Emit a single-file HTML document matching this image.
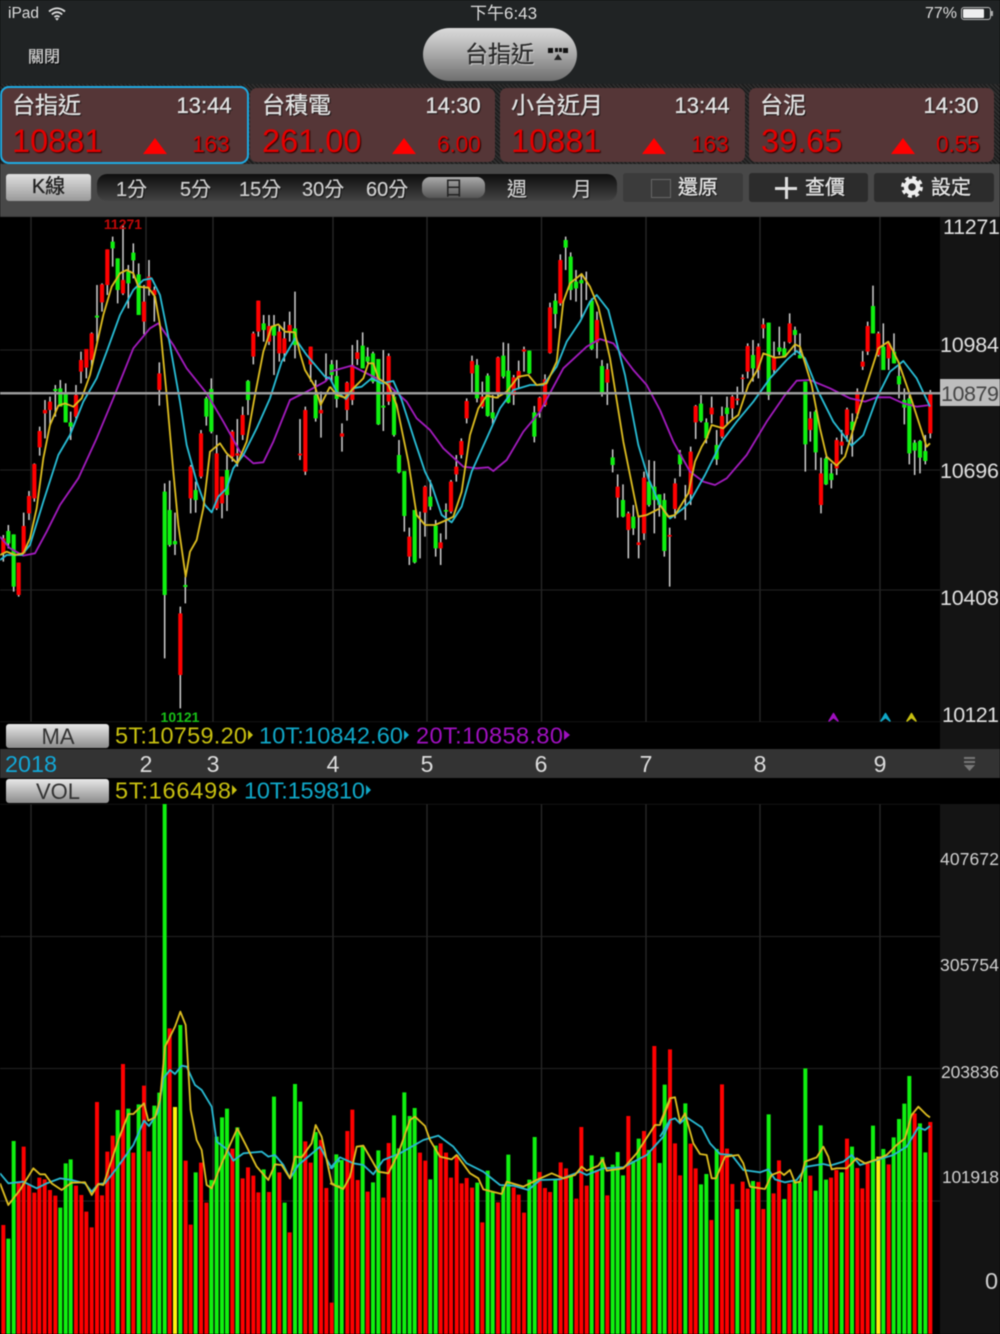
<!DOCTYPE html>
<html lang="zh-Hant"><head><meta charset="utf-8"><title>K線</title>
<style>
html,body{margin:0;padding:0;background:#000;width:1000px;height:1334px;overflow:hidden}
#w{position:relative;width:1000px;height:1334px;overflow:hidden;background:#000;font-family:"Liberation Sans","Noto Sans CJK TC",sans-serif;filter:blur(.4px)}
.a{position:absolute;box-sizing:border-box}
.t{position:absolute;white-space:nowrap;text-align:left}
.c{text-align:center}
.r{text-align:right}
.card{position:absolute;top:88px;height:74px;width:245px;background:#553637;border-radius:7px}
.n{font-size:23px;color:#e2e2e2;line-height:30px;top:90px;text-shadow:1px 1px 1px #111;-webkit-text-stroke:.35px #e2e2e2;margin-left:-1px}
.tm{font-size:22px;color:#e2e2e2;line-height:30px;top:91px;text-shadow:1px 1px 1px #111;-webkit-text-stroke:.35px #e2e2e2;margin-left:-.5px}
.p{font-size:32.500px;color:#e30000;line-height:40px;top:121px;text-shadow:1px 1px 1px #300;margin-left:-1px}
.d{font-size:23px;color:#d80000;line-height:30px;top:129px;text-shadow:1px 1px 1px #200;letter-spacing:-.3px}
.tri{position:absolute;top:138px;width:0;height:0;border-left:12px solid transparent;border-right:12px solid transparent;border-bottom:16px solid #f00;margin-left:-1px}
.b{font-size:20px;color:#d0d0d0;line-height:26px;top:177px;text-shadow:1px 1px 1px #111;-webkit-text-stroke:.2px #d0d0d0}
.x{font-size:20px;line-height:28px;color:#e2e2e2;top:174px;text-shadow:1px 1px 1px #111;-webkit-text-stroke:.4px #e2e2e2}
svg{position:absolute;left:0;top:0}
</style></head><body><div id="w">

<div class="a" style="left:0;top:0;width:1000px;height:84px;background:#202324"></div>
<div class="a" style="left:0;top:84px;width:1000px;height:80px;background:repeating-linear-gradient(45deg,#303030 0,#303030 1.5px,#1b1b1b 1.5px,#1b1b1b 3px)"></div>
<div class="a" style="left:0;top:164px;width:1000px;height:53px;background:#484848"></div>

<div class="t" style="left:8px;top:5px;font-size:15.500px;line-height:18px;color:#ddd">iPad</div>
<svg width="20" height="16" style="left:47px;top:6px" viewBox="0 0 20 16"><path d="M2 5.5Q10 -1 18 5.5M4.8 8.4Q10 4 15.2 8.4M7.4 11Q10 8.8 12.6 11" fill="none" stroke="#ddd" stroke-width="1.8"/><path d="M10 14.6L8.2 12.6Q10 11.4 11.8 12.6Z" fill="#ddd"/></svg>
<div class="t" style="left:470px;top:5px;font-size:17px;line-height:18px;color:#ddd">下午6:43</div>
<div class="t" style="left:925px;top:5px;font-size:16px;line-height:18px;color:#ddd">77%</div>
<div class="a" style="left:961px;top:7px;width:30px;height:13px;border:1px solid #bbb;border-radius:3px"></div>
<div class="a" style="left:963px;top:9px;width:21px;height:9px;background:#eee;border-radius:1px"></div>
<div class="a" style="left:991px;top:11px;width:2px;height:5px;background:#aaa"></div>
<div class="t" style="left:28px;top:47px;font-size:16px;line-height:22px;color:#ccc;text-shadow:1px 1px 1px #000;-webkit-text-stroke:.3px #ccc">關閉</div>

<div class="a" style="left:423px;top:28px;width:154px;height:53px;border-radius:27px;background:linear-gradient(#dcdcdc,#a8a8a8 50%,#6e6e6e)"></div>
<div class="t" style="left:465px;top:38px;font-size:23px;line-height:32px;color:#2a2a2a;text-shadow:1px 1px 1px #ddd;-webkit-text-stroke:.3px #2a2a2a">台指近</div>
<svg width="24" height="20" style="left:546px;top:45px" viewBox="0 0 24 20"><path d="M2 3h5v5h-5zM9 3h3v4h-3zM13 3h3v4h-3zM17 3h5v5h-5z" fill="#111"/><path d="M12 9l4 6h-8z" fill="#222"/></svg>

<div class="card" style="left:250px"></div>
<div class="card" style="left:500px"></div>
<div class="card" style="left:749px"></div>
<div class="a" style="left:0;top:86px;width:249px;height:78px;background:#553637;border:2px solid #1eaae2;border-radius:9px"></div>

<div class="t n" style="left:13px">台指近</div>
<div class="t tm" style="left:177px">13:44</div>
<div class="t p" style="left:13px">10881</div>
<div class="tri" style="left:144px"></div>
<div class="t d" style="left:192px">163</div>

<div class="t n" style="left:263px">台積電</div>
<div class="t tm" style="left:426px">14:30</div>
<div class="t p" style="left:263px">261.00</div>
<div class="tri" style="left:393px"></div>
<div class="t d" style="left:437px">6.00</div>

<div class="t n" style="left:512px">小台近月</div>
<div class="t tm" style="left:675px">13:44</div>
<div class="t p" style="left:512px">10881</div>
<div class="tri" style="left:643px"></div>
<div class="t d" style="left:691px">163</div>

<div class="t n" style="left:761px">台泥</div>
<div class="t tm" style="left:924px">14:30</div>
<div class="t p" style="left:762px">39.65</div>
<div class="tri" style="left:892px"></div>
<div class="t d" style="left:936px">0.55</div>

<div class="a" style="left:6px;top:174px;width:85px;height:27px;border-radius:3px;background:linear-gradient(#e0e0e0,#9a9a9a)"></div>
<div class="t c" style="left:6px;width:85px;top:174px;font-size:20px;line-height:26px;color:#222;-webkit-text-stroke:.3px #222">K線</div>
<div class="a" style="left:97px;top:174px;width:520px;height:27px;border-radius:10px;background:linear-gradient(#0d0d0d,#444)"></div>
<div class="t b" style="left:116px">1分</div>
<div class="t b" style="left:180px">5分</div>
<div class="t b" style="left:239px">15分</div>
<div class="t b" style="left:302px">30分</div>
<div class="t b" style="left:366px">60分</div>
<div class="a" style="left:422px;top:177px;width:63px;height:21px;border-radius:8px;background:linear-gradient(#aaa,#555)"></div>
<div class="t c" style="left:422px;width:63px;top:176px;font-size:20px;line-height:26px;color:#222">日</div>
<div class="t b" style="left:507px">週</div>
<div class="t b" style="left:572px">月</div>

<div class="a" style="left:623px;top:173px;width:120px;height:29px;border-radius:3px;background:#3b3b3b"></div>
<div class="a" style="left:651px;top:179px;width:20px;height:19px;border:1px solid #666;background:#3a3a3a"></div>
<div class="t x" style="left:678px">還原</div>
<div class="a" style="left:749px;top:173px;width:119px;height:29px;border-radius:3px;background:#2c2c2c"></div>
<div class="a" style="left:775px;top:187px;width:22px;height:2.5px;background:#ddd"></div>
<div class="a" style="left:785px;top:177px;width:2.5px;height:22px;background:#ddd"></div>
<div class="t x" style="left:805px">查價</div>
<div class="a" style="left:874px;top:173px;width:120px;height:29px;border-radius:3px;background:#2c2c2c"></div>
<svg width="24" height="24" style="left:900px;top:175px" viewBox="0 0 24 24"><circle cx="12" cy="12" r="6" fill="none" stroke="#eee" stroke-width="4.4"/><circle cx="12" cy="12" r="9.4" fill="none" stroke="#eee" stroke-width="3" stroke-dasharray="4 3.38"/></svg>
<div class="t x" style="left:931px">設定</div>

<svg width="1000" height="1334" viewBox="0 0 1000 1334" font-family="'Liberation Sans',sans-serif" style="top:0;left:0">
<rect x="0" y="216" width="1000" height="1" fill="#3e3e3e"/>
<rect x="940" y="217" width="60" height="532" fill="#141414"/>
<rect x="940" y="804" width="60" height="530" fill="#141414"/>

<!-- grid -->
<path d="M31 217V722M146 217V722M213 217V722M333 217V722M427 217V722M541.5 217V722M646 217V722M760 217V722M880 217V722M31 804V1334M146 804V1334M213 804V1334M333 804V1334M427 804V1334M541.5 804V1334M646 804V1334M760 804V1334M880 804V1334" stroke="#272727" stroke-width="1.4" fill="none"/>
<path d="M0 350H940M0 470H940M0 590H940M0 722H940M0 804H940M0 936.500H940M0 1068.500H940M0 1201H940" stroke="#232323" stroke-width="1" fill="none"/>

<!-- price candles A -->
<g transform="translate(0,215) scale(.33333)" fill="none">
<path stroke="#cfcfcf" stroke-width="4.500" d="M10 960V1040M25 930V1000M41 958V1130M56 1043V1145M71 893V1015M87 828V915M103 745V860M119 635V722M135 555V670M150 545V632M166 510V605M181 495V570M197 505V622M212 590V675M228 510V610M243 410V505M259 402V490M275 352V460M291 210V380M306 205V290M322 103V240M338 65V155M353 130V265M369 30V240M385 150V280M400 85V190M416 145V300M432 210V358M447 135V242M463 215V320M478 442V572M494 805V1330M509 797V995M525 893V1020M541 1175V1480M556 1085V1165M572 750V895M587 800V893M603 645V790M619 545V632M634 490V655M650 660V885M666 785V910M681 720V888M697 645V740M712 612V755M728 575V675M744 495V600M760 350V448M775 257V365M791 300V380M807 300V390M822 300V480M838 330V440M853 320V440M869 290V380M885 230V430M900 612V735M916 575V780M932 395V500M947 495V620M963 530V668M978 415V500"/>
<path stroke="#ff0000" stroke-width="12.500" d="M10 970V1015M56 1043V1140M71 933V1015M87 843V895M103 747V850M119 648V697M135 585V595M150 560V585M228 540V605M243 435V470M259 402V458M275 355V435M306 208V262M322 103V210M369 195V235M432 260V320M447 185V220M463 225V240M478 475V525M541 1195V1380M572 755V850M603 655V785M650 715V880M666 785V865M697 650V725M712 715V722M728 600V660M760 355V425M775 257V350M807 333V380M838 350V415M853 370V415M869 330V350M900 716V721M916 585V770M932 395V448M963 585V595"/>
<path stroke="#10f010" stroke-width="12.500" d="M25 948V985M41 958V1115M166 522V528M181 520V575M197 535V622M212 622V635M291 302V308M338 80V100M353 130V225M385 170V205M400 113V136M416 178V300M494 830V1140M509 885V990M525 978V988M556 1110V1116M587 825V855M619 550V605M634 522V650M681 765V840M744 498V555M791 325V345M822 333V362M885 340V390M947 540V610"/>
<path stroke="#a21bbd" stroke-width="5.500" stroke-linejoin="round" d="M0 965L30 1000L70 1022L105 1015L140 950L180 870L235 790L290 670L340 550L400 400L450 340L475 325L520 390L560 460L620 535L670 620L720 710L760 745L790 742L820 680L870 555L920 530L975 500L990 485"/>
<path stroke="#28bcd4" stroke-width="5.500" stroke-linejoin="round" d="M0 1035L20 1020L45 1020L65 1020L90 990L130 860L175 720L210 660L250 560L290 490L320 410L360 300L400 225L430 195L455 190L480 240L510 390L540 560L560 690L590 800L615 870L635 892L655 845L680 820L700 760L730 720L770 640L810 550L845 440L885 370L920 420L975 485L990 490"/>
<path stroke="#dcbc20" stroke-width="5.500" stroke-linejoin="round" d="M0 1020L20 1010L45 1020L70 1015L90 970L110 880L130 730L150 630L175 572L195 565L220 575L245 550L270 480L290 390L310 300L335 215L360 175L380 165L400 175L415 215L445 218L465 245L480 330L500 540L520 770L535 930L557 1085L570 1010L590 975L610 880L630 710L660 685L680 715L712 745L740 680L765 540L790 410L815 335L835 328L855 350L885 352L900 415L915 465L945 515L962 570L990 515"/>
</g>
<!-- price candles B -->
<g transform="translate(330,215) scale(.33333)" fill="none">
<path stroke="#cfcfcf" stroke-width="4.500" d="M5 435V500M20 435V578M36 625V710M51 500V617M67 390V570M82 375V450M98 352V460M113 397V445M129 410V505M145 432V630M160 405V648M176 415V570M192 530V665M207 675V775M223 768V950M238 938V1050M254 885V1045M270 890V1030M285 812V965M301 795V885M317 915V1025M332 955V1050M348 865V973M363 795V895M379 720V800M394 670V730M410 550V625M426 422V535M441 432V562M457 500V580M473 475V605M488 540V628M504 425V550M520 382V490M535 385V565M551 480V570M566 437V520M582 395V470M598 407V477M613 573V682M629 545V608M645 478V575M660 263V416M676 235V340M691 118V272M707 65V165M722 112V255M738 165V260M754 175V310M769 170V255M785 250V405M801 290V430M816 435V545M832 445V570M848 703V772M863 778V908M879 808V907M895 890V1030M910 870V960M926 905V1030M942 770V975M957 735V875M973 738V955M988 838V905"/>
<path stroke="#ff0000" stroke-width="12.500" d="M36 655V665M51 503V585M67 450V555M82 412V432M176 423V560M238 965V1025M285 815V893M332 982V1000M363 800V890M379 755V778M394 678V720M410 558V610M426 438V475M457 545V575M504 427V535M551 487V540M566 468V490M582 403V410M629 548V590M645 493V570M660 277V414M691 135V265M801 315V382M832 463V503M863 815V848M895 895V945M926 982V990M942 788V955"/>
<path stroke="#10f010" stroke-width="12.500" d="M5 448V480M20 483V552M98 392V460M113 425V440M129 415V500M145 432V628M160 572V578M192 545V660M207 720V772M223 768V903M254 885V1042M301 845V875M317 932V1000M348 885V890M441 450V550M473 482V603M488 592V610M520 422V485M535 467V563M598 407V475M613 592V665M676 257V297M707 75V98M722 125V225M738 200V220M754 195V205M785 257V402M816 453V535M848 727V750M879 855V905M910 905V940M957 800V870M973 815V855M988 838V870"/>
<path stroke="#a21bbd" stroke-width="5.500" stroke-linejoin="round" d="M0 470L65 452L120 480L170 505L230 560L260 610L300 645L340 700L400 755L440 760L475 757L490 768L530 735L580 650L630 590L700 460L770 395L810 372L850 385L910 465L950 510L990 585"/>
<path stroke="#28bcd4" stroke-width="5.500" stroke-linejoin="round" d="M0 490L20 530L48 552L70 520L95 515L125 490L155 505L190 498L215 555L255 680L285 770L305 810L335 900L365 922L395 875L425 770L470 670L510 580L550 525L600 510L640 510L680 455L710 380L750 320L780 260L800 240L835 285L885 480L925 690L955 790L990 870"/>
<path stroke="#dcbc20" stroke-width="5.500" stroke-linejoin="round" d="M0 515L20 540L45 548L70 520L100 490L115 445L130 445L145 490L175 510L200 570L235 740L260 900L285 930L315 930L350 915L370 905L395 830L420 660L445 580L470 542L500 548L530 530L565 485L595 480L620 510L650 505L680 440L700 260L720 205L755 177L780 215L805 275L840 430L880 680L925 905L950 900L990 880"/>
</g>
<!-- price candles C -->
<g transform="translate(660,215) scale(.33333)" fill="none">
<path stroke="#cfcfcf" stroke-width="4.500" d="M13 835V1025M29 938V1115M45 790V910M60 705V785M76 810V915M92 695V870M107 570V672M123 540V622M139 610V685M155 545V625M170 645V750M186 575V670M201 545V630M217 540V610M232 515V570M248 478V535M263 385V490M279 375V500M295 385V490M310 310V370M326 323V555M342 380V475M358 335V420M373 380V425M389 295V385M405 335V420M420 355V430M436 500V770M451 590V680M467 585V765M483 728V895M498 725V810M514 745V820M530 668V780M545 645V718M561 578V680M577 595V725M592 520V610M608 408V465M623 320V420M639 212V355M655 350V425M670 325V465M686 385V465M702 355V445M717 450V550M733 520V628M748 540V748M764 675V780M780 675V775M796 660V748M811 525V670"/>
<path stroke="#ff0000" stroke-width="12.500" d="M29 960V965M45 805V882M92 710V838M107 573V622M155 578V598M186 603V665M217 545V580M232 551V556M248 488V492M263 393V470M295 395V465M310 328V340M342 425V465M389 325V382M451 610V645M483 775V870M530 675V760M545 680V692M561 583V660M592 530V595M608 440V455M623 333V410M655 355V420M686 385V430M811 538V655"/>
<path stroke="#10f010" stroke-width="12.500" d="M13 855V1008M60 718V748M123 566V618M139 622V670M170 690V733M201 578V597M279 420V460M326 323V540M358 397V410M373 400V425M405 345V360M420 420V430M436 500V688M467 590V712M498 730V808M514 775V795M577 620V645M639 273V355M670 395V465M702 410V445M717 483V508M733 555V578M748 550V715M764 683V707M780 678V728M796 708V738"/>
<path stroke="#a21bbd" stroke-width="5.500" stroke-linejoin="round" d="M0 585L40 680L90 770L130 800L165 810L200 790L260 720L320 620L375 540L410 497L450 495L510 520L570 550L615 560L650 547L690 547L730 565L770 575L810 570"/>
<path stroke="#28bcd4" stroke-width="5.500" stroke-linejoin="round" d="M0 870L30 910L70 880L90 860L135 780L185 680L230 620L280 560L330 490L380 435L410 408L435 430L475 530L520 620L575 692L610 660L650 550L690 470L730 438L770 490L810 575"/>
<path stroke="#dcbc20" stroke-width="5.500" stroke-linejoin="round" d="M0 870L25 905L45 900L85 835L105 740L125 695L140 670L155 630L190 640L215 615L235 600L265 510L295 460L310 415L345 428L375 425L405 388L420 395L455 510L480 640L500 725L530 752L555 725L585 625L620 510L655 400L685 380L715 440L750 540L800 695L810 685"/>
</g>

<!-- volume A -->
<g transform="translate(0,1000) scale(.33333)" fill="none" stroke-width="12">
<path stroke="#ff0000" d="M10 675V1002M56 548V1002M71 440V1002M87 555V1002M103 578V1002M118 533V1002M134 538V1002M150 570V1002M166 587V1002M228 557V1002M244 585V1002M259 635V1002M275 682V1002M291 306V1002M306 586V1002M322 455V1002M338 407V1002M369 192V1002M400 458V1002M432 257V1002M447 454V1002M509 85V1002M557 482V1002M572 674V1002M603 488V1002M619 608V1002M697 446V1002M728 535V1002M744 502V1002M760 527V1002M775 577V1002M807 576V1002M838 517V1002M869 697V1002M916 424V1002M932 488V1002M963 420V1002M979 564V1002M995 908V1002"/>
<path stroke="#10f010" d="M25 716V1002M41 423V1002M181 623V1002M197 490V1002M212 478V1002M353 330V1002M385 326V1002M416 313V1002M463 317V1002M478 278V1002M494 -588V1002M541 75V1002M587 517V1002M634 540V1002M650 410V1002M666 352V1002M681 326V1002M712 382V1002M791 508V1002M822 290V1002M854 608V1002M885 252V1002M901 305V1002M947 396V1002"/>
<path stroke="#fff010" d="M525 321V1002"/>
<path stroke="#28b8d0" stroke-width="5.500" stroke-linejoin="round" d="M0 520L25 550L70 545L110 565L140 550L180 535L215 540L255 550L275 575L295 552L315 550L350 505L400 435L432 362L447 378L475 335L490 235L510 210L525 222L545 197L560 200L585 255L605 270L635 320L650 425L680 447L700 482L730 460L785 455L805 470L825 465L850 495L870 535L895 495L960 440L995 505L1020 480"/>
<path stroke="#dcbc20" stroke-width="5.500" stroke-linejoin="round" d="M0 550L25 615L60 570L100 505L120 523L135 523L155 550L185 570L215 548L255 547L275 585L295 552L310 555L335 480L355 420L385 342L400 342L432 310L445 362L465 352L480 300L495 140L525 80L541 35L557 75L572 330L590 420L605 450L620 555L635 565L665 490L712 385L740 440L770 500L805 540L825 493L845 495L870 535L885 470L905 472L935 430L947 375L965 410L995 550L1020 560"/>
</g>
<!-- volume B -->
<g transform="translate(330,1000) scale(.33333)" fill="none" stroke-width="12">
<path stroke="#ff0000" d="M52 393V1002M67 329V1002M83 540V1002M113 575V1002M160 593V1002M176 429V1002M270 458V1002M286 482V1002M332 430V1002M348 458V1002M363 533V1002M380 465V1002M395 550V1002M410 534V1002M426 563V1002M457 667V1002M504 607V1002M551 562V1002M566 584V1002M582 638V1002M629 516V1002M645 564V1002M660 576V1002M692 487V1002M708 505V1002M739 596V1002M754 381V1002M770 557V1002M801 510V1002M832 586V1002M895 348V1002M942 393V1002M973 138V1002M1020 148V1002"/>
<path stroke="#10f010" d="M19 463V1002M35 480V1002M98 440V1002M129 547V1002M145 451V1002M192 346V1002M207 445V1002M223 277V1002M239 348V1002M254 324V1002M301 538V1002M317 437V1002M442 548V1002M473 512V1002M488 575V1002M520 560V1002M535 464V1002M598 539V1002M614 411V1002M676 540V1002M723 525V1002M785 466V1002M817 471V1002M848 494V1002M863 456V1002M879 526V1002M910 483V1002M926 416V1002M957 450V1002M989 489V1002M1004 254V1002"/>
<path stroke="#28b8d0" stroke-width="5.500" stroke-linejoin="round" d="M0 505L30 472L70 490L100 495L130 523L160 480L210 460L280 420L325 407L370 440L410 490L460 515L510 555L550 557L595 570L630 540L690 538L750 515L770 525L820 505L880 502L950 465L1000 410L1020 365"/>
<path stroke="#dcbc20" stroke-width="5.500" stroke-linejoin="round" d="M0 550L40 567L60 530L80 440L100 437L125 480L145 515L175 520L205 460L240 360L255 350L285 378L300 420L330 470L365 478L380 465L420 520L445 535L460 568L515 582L530 545L580 560L620 540L665 520L700 535L735 525L755 500L770 512L805 497L818 478L830 512L880 505L920 460L975 375L990 375L1020 300"/>
</g>
<!-- volume C -->
<g transform="translate(660,1000) scale(.33333)" fill="none" stroke-width="12">
<path stroke="#ff0000" d="M45 430V1002M60 526V1002M92 431V1002M107 505V1002M154 660V1002M186 253V1002M201 446V1002M217 552V1002M248 545V1002M263 566V1002M295 546V1002M310 627V1002M341 580V1002M357 481V1002M388 551V1002M451 527V1002M513 533V1002M529 510V1002M561 416V1002M592 504V1002M607 565V1002M623 490V1002M686 493V1002M764 340V1002M811 366V1002"/>
<path stroke="#10f010" d="M76 310V1002M123 553V1002M139 522V1002M170 447V1002M232 627V1002M279 543V1002M326 343V1002M373 597V1002M404 540V1002M420 545V1002M436 205V1002M467 572V1002M482 376V1002M498 539V1002M545 517V1002M576 440V1002M639 377V1002M670 447V1002M701 412V1002M717 357V1002M733 311V1002M748 228V1002M780 370V1002M796 457V1002"/>
<path stroke="#fff010" d="M655 470V1002"/>
<path stroke="#28b8d0" stroke-width="5.500" stroke-linejoin="round" d="M0 410L30 360L45 355L60 370L80 352L125 382L150 430L180 462L215 465L250 510L300 517L325 508L345 538L375 547L410 540L440 500L490 492L510 497L550 485L575 465L600 495L650 480L700 465L740 440L775 382L795 390L810 378"/>
<path stroke="#dcbc20" stroke-width="5.500" stroke-linejoin="round" d="M0 370L30 295L45 292L60 365L75 340L100 430L120 462L140 465L155 535L168 535L195 470L235 465L250 490L270 560L315 567L335 525L360 515L372 525L390 510L405 548L420 545L435 485L470 472L490 440L505 470L515 508L530 505L560 505L590 475L615 490L650 478L680 465L710 435L735 415L755 345L775 320L800 345L810 352"/>
</g>

<!-- price line + labels -->
<rect x="0" y="392" width="940" height="2.500" fill="#9a9a9a"/>
<rect x="940" y="379" width="60" height="27" fill="#bdbdbd"/>
<text x="123" y="229" font-size="14" font-weight="700" fill="#c00808" text-anchor="middle">11271</text>
<text x="180" y="722" font-size="14" font-weight="700" fill="#18c018" text-anchor="middle">10121</text>
<g font-size="21.500" fill="#e0e0e0">
<text x="943" y="234" textLength="57">11271</text>
<text x="940" y="352" textLength="59">10984</text>
<text x="941" y="401" textLength="58" fill="#444">10879</text>
<text x="940" y="478" textLength="59">10696</text>
<text x="940" y="605" textLength="59">10408</text>
<text x="942" y="722" textLength="57">10121</text>
</g>
<path d="M829 721L833.500 713.500L838 721L833.500 717.500Z" fill="#a010c0" stroke="#a010c0" stroke-width="1.500" stroke-linejoin="round"/>
<path d="M881 721L885.500 713.500L890 721L885.500 717.500Z" fill="#10a8c8" stroke="#10a8c8" stroke-width="1.500" stroke-linejoin="round"/>
<path d="M907 721L911.500 713.500L916 721L911.500 717.500Z" fill="#c8c010" stroke="#c8c010" stroke-width="1.500" stroke-linejoin="round"/>

<!-- MA row -->
<rect x="0" y="722" width="940" height="27" fill="#000"/>
<rect x="6" y="724" width="103" height="24" rx="3" fill="url(#g)"/>
<text x="58" y="744" font-size="22" fill="#333" text-anchor="middle">MA</text>
<text x="115" y="743.500" font-size="23.500" fill="#c8c010" textLength="132">5T:10759.20</text>
<path d="M248 730l5 5l-5 5z" fill="#c8c010"/>
<text x="259" y="743.500" font-size="23.500" fill="#10a8c8" textLength="144">10T:10842.60</text>
<path d="M404 730l5 5l-5 5z" fill="#10a8c8"/>
<text x="416" y="743.500" font-size="23.500" fill="#a010c0" textLength="147">20T:10858.80</text>
<path d="M564 730l6 5l-6 5z" fill="#a010c0"/>

<!-- date row -->
<rect x="0" y="749" width="1000" height="29" fill="#333"/>
<g font-size="23" fill="#ddd" text-anchor="middle">
<text x="31" y="772" fill="#12a8d8" textLength="52" lengthAdjust="spacingAndGlyphs">2018</text>
<text x="146" y="772">2</text><text x="213" y="772">3</text><text x="333" y="772">4</text><text x="427" y="772">5</text>
<text x="541" y="772">6</text><text x="646" y="772">7</text><text x="760" y="772">8</text><text x="880" y="772">9</text>
</g>
<path d="M964 757h11v2h-11zM964 761h11v2h-11zM964 765h11l-5.500 6z" fill="#777"/>

<!-- VOL row -->
<rect x="0" y="778" width="1000" height="26" fill="#000"/>
<rect x="6" y="779" width="103" height="24" rx="3" fill="url(#g)"/>
<text x="58" y="799" font-size="22" fill="#333" text-anchor="middle">VOL</text>
<text x="115" y="798.500" font-size="23.500" fill="#c8c010" textLength="116">5T:166498</text>
<path d="M232 785l5 5l-5 5z" fill="#c8c010"/>
<text x="244" y="798.500" font-size="23.500" fill="#10a8c8" textLength="121">10T:159810</text>
<path d="M366 785l5 5l-5 5z" fill="#10a8c8"/>

<g font-size="17.500" fill="#d0d0d0">
<text x="940" y="865" textLength="59">407672</text>
<text x="940" y="971" textLength="59">305754</text>
<text x="941" y="1078" textLength="58">203836</text>
<text x="942" y="1183" textLength="57">101918</text>
</g>
<text x="985" y="1289" font-size="23.500" fill="#d0d0d0">0</text>
<defs><linearGradient id="g" x1="0" y1="0" x2="0" y2="1"><stop offset="0" stop-color="#e8e8e8"/><stop offset="1" stop-color="#8c8c8c"/></linearGradient></defs>
</svg>
</div></body></html>
